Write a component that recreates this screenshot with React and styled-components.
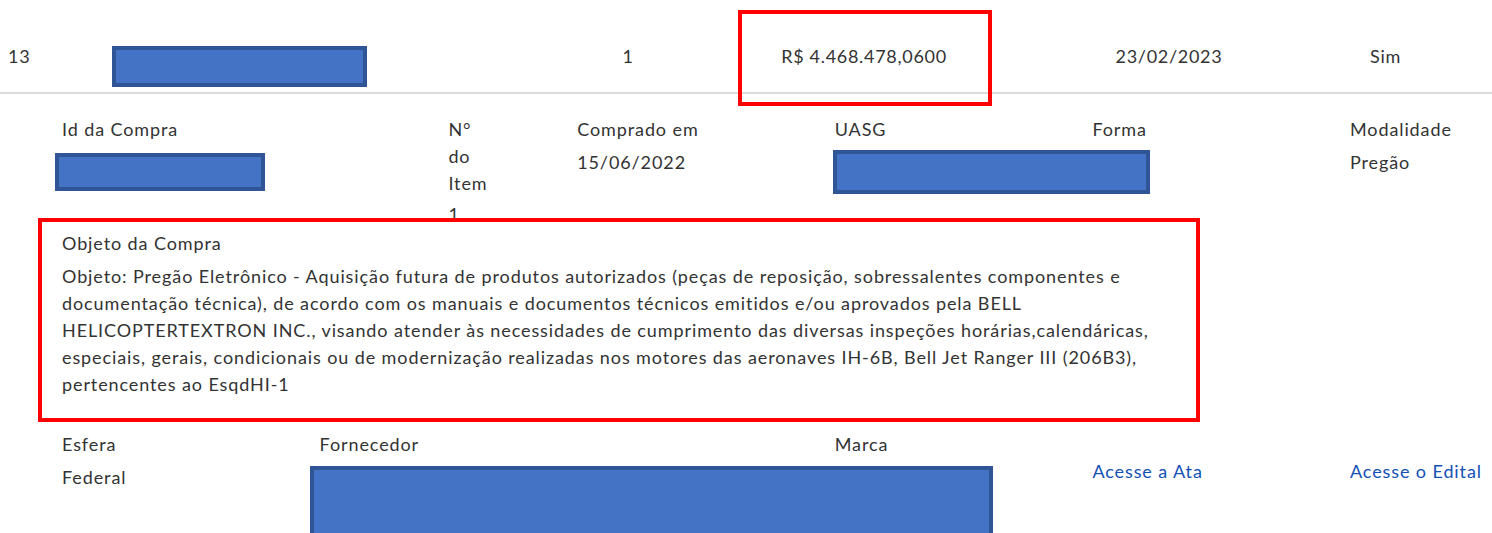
import React from "react";
import styled, { createGlobalStyle } from "styled-components";

const GlobalStyle = createGlobalStyle`
    html, body {
        margin: 0;
        padding: 0;
        overflow: hidden;
        background: #fff;
    }
    body {
        font-family: Lato, "Open Sans", sans-serif;
        font-size: 18px;
        line-height: 27px;
        letter-spacing: 0.9px;
        color: #333;
    }
`

const Page = styled.div`
    width: 1492px;
`

const ItemRow = styled.div`
    display: grid;
    grid-template-columns: 112px 408px 216px 256px 354px 79px 1fr;
    align-items: start;
    box-sizing: border-box;
    height: 94px;
    padding-top: 43px;
    border-bottom: 2px solid #dadada;
`

const Cell = styled.div`
    position: relative;
    text-align: ${props => props.$align || 'left'};
    padding-left: ${props => props.$pad || 0}px;
    letter-spacing: 0.7px;
`

// anotações em vermelho por cima do conteúdo
const Highlight = styled.div`
    position: absolute;
    top: ${props => props.$top}px;
    left: ${props => props.$left}px;
    right: ${props => props.$right}px;
    bottom: ${props => props.$bottom}px;
    border: 4px solid #ff0000;
    pointer-events: none;
`

const Redact = styled.div`
    box-sizing: border-box;
    width: ${props => props.$w}px;
    height: ${props => props.$h}px;
    margin-top: ${props => props.$top || 0}px;
    margin-left: ${props => props.$left || 0}px;
    background: #4472c4;
    border: 4px solid #2f5597;
`

const DetailRow = styled.div`
    display: grid;
    grid-template-columns: repeat(12, 128.8px);
    margin-left: 46px;
    margin-top: ${props => props.$gap}px;
    align-items: start;
`

const Field = styled.div`
    position: relative;
    grid-column: span ${props => props.$span};
    padding: 0 16px;
    padding-top: ${props => props.$offset || 0}px;
`

const Label = styled.div`
    width: ${props => props.$narrow ? 'min-content' : 'auto'};
`

const Value = styled.div`
    margin-top: ${props => props.$gap ?? 6}px;
`

const Line = styled.span`
    display: block;
    white-space: nowrap;
`

const Link = styled.a`
    color: #1351b4;
    text-decoration: none;
`

const objeto = [
    'Objeto: Pregão Eletrônico - Aquisição futura de produtos autorizados (peças de reposição, sobressalentes componentes e',
    'documentação técnica), de acordo com os manuais e documentos técnicos emitidos e/ou aprovados pela BELL',
    'HELICOPTERTEXTRON INC., visando atender às necessidades de cumprimento das diversas inspeções horárias,calendáricas,',
    'especiais, gerais, condicionais ou de modernização realizadas nos motores das aeronaves IH-6B, Bell Jet Ranger III (206B3),',
    'pertencentes ao EsqdHI-1',
]

export default function App () {
    return (
    <Page>
        <GlobalStyle />

        <ItemRow>
            <Cell $pad={8}>13</Cell>
            <Cell>
                <Redact $w={255} $h={41} $top={3} />
            </Cell>
            <Cell $align='center'>1</Cell>
            <Cell $align='center'>
                R$ 4.468.478,0600
                <Highlight $top={-33} $left={2} $right={0} $bottom={-36} />
            </Cell>
            <Cell $align='center'>23/02/2023</Cell>
            <Cell $align='center'>Sim</Cell>
            <Cell />
        </ItemRow>

        <DetailRow $gap={22}>
            <Field $span={3}>
                <Label>Id da Compra</Label>
                <Redact $w={210} $h={38} $top={10} $left={-7} />
            </Field>
            <Field $span={1}>
                <Label $narrow>N° do Item</Label>
                <Value $gap={4}>1</Value>
            </Field>
            <Field $span={2}>
                <Label>Comprado em</Label>
                <Value>15/06/2022</Value>
            </Field>
            <Field $span={2}>
                <Label>UASG</Label>
                <Redact $w={317} $h={44} $top={7} $left={-2} />
            </Field>
            <Field $span={2}>
                <Label>Forma</Label>
            </Field>
            <Field $span={2}>
                <Label>Modalidade</Label>
                <Value>Pregão</Value>
            </Field>
        </DetailRow>

        <DetailRow $gap={2}>
            <Field $span={9}>
                <Label>Objeto da Compra</Label>
                <Value>
                    {objeto.map((l, i) => <Line key={i}>{l}</Line>)}
                </Value>
                <Highlight $top={-12} $left={-8} $right={5} $bottom={-24} />
            </Field>
        </DetailRow>

        <DetailRow $gap={33}>
            <Field $span={2}>
                <Label>Esfera</Label>
                <Value>Federal</Value>
            </Field>
            <Field $span={4}>
                <Label>Fornecedor</Label>
                <Redact $w={683} $h={80} $top={8} $left={-10} />
            </Field>
            <Field $span={2}>
                <Label>Marca</Label>
            </Field>
            <Field $span={2} $offset={27}>
                <Link href='#'>Acesse a Ata</Link>
            </Field>
            <Field $span={2} $offset={27}>
                <Link href='#'>Acesse o Edital</Link>
            </Field>
        </DetailRow>
    </Page>
    )
}
